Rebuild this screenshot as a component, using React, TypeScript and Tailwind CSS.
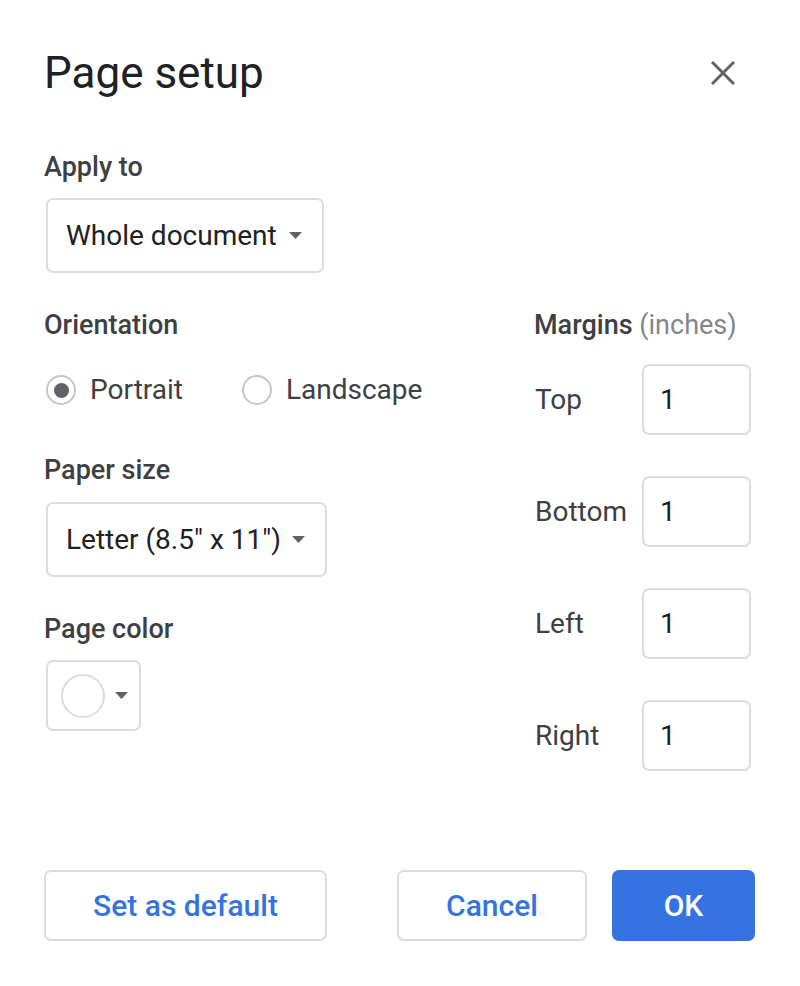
import React from "react";

const font = { fontFamily: "Roboto, 'Noto Sans', Arial, sans-serif" };

function Caret() {
  return (
    <svg width="13" height="7" viewBox="0 0 13 7" className="shrink-0">
      <path d="M0 0h13L6.5 7z" fill="#5f6368" />
    </svg>
  );
}

function Select({ value, width }: { value: string; width: string }) {
  return (
    <div
      className={`${width} h-[75px] flex items-center justify-between pl-[18px] pr-[20px] border-2 border-[#dadce0] rounded-[7px] bg-white`}
    >
      <span className="text-[28px] text-[#202124]">{value}</span>
      <Caret />
    </div>
  );
}

function Radio({ label, checked }: { label: string; checked?: boolean }) {
  return (
    <div className="flex items-center h-[32px]">
      <div className="w-[30px] h-[30px] rounded-full border-2 border-[#c4c7c5] flex items-center justify-center">
        {checked && <div className="w-[15px] h-[15px] rounded-full bg-[#5f6368]" />}
      </div>
      <span className="ml-[14px] text-[28px] text-[#3c4043]">{label}</span>
    </div>
  );
}

function MarginRow({ label }: { label: string }) {
  return (
    <div className="flex items-center">
      <span className="w-[108px] pl-[1px] text-[28px] text-[#3c4043]">{label}</span>
      <div className="w-[109px] h-[71px] flex items-center pl-[16px] border-2 border-[#dadce0] rounded-[7px] text-[28px] text-[#202124]">
        1
      </div>
    </div>
  );
}

export default function App() {
  return (
    <div className="w-[800px] h-[986px] bg-white pl-[44px] pr-[45px]" style={font}>
      {/* Header */}
      <div className="flex items-center justify-between pt-[47px] pr-[20px]">
        <h1 className="text-[44px] leading-[52px] font-normal text-[#202124]">Page setup</h1>
        <svg width="24" height="24" viewBox="0 0 24 24">
          <path d="M1 1L23 23M23 1L1 23" stroke="#5f6368" strokeWidth="3" />
        </svg>
      </div>

      {/* Apply to */}
      <div className="mt-[52px] text-[27px] leading-[32px] font-medium text-[#3c4043]">Apply to</div>
      <div className="mt-[15px] ml-[2px]">
        <Select value="Whole document" width="w-[278px]" />
      </div>

      <div className="flex mt-[36px]">
        {/* Left column */}
        <div className="w-[490px]">
          <div className="text-[27px] leading-[32px] font-medium text-[#3c4043]">Orientation</div>
          <div className="flex gap-[59px] mt-[33px] ml-[2px]">
            <Radio label="Portrait" checked />
            <Radio label="Landscape" />
          </div>

          <div className="mt-[48px] text-[27px] leading-[32px] font-medium text-[#3c4043]">Paper size</div>
          <div className="mt-[16px] ml-[2px]">
            <Select value={'Letter (8.5" x 11")'} width="w-[281px]" />
          </div>

          <div className="mt-[36px] text-[27px] leading-[32px] font-medium text-[#3c4043]">Page color</div>
          <div className="mt-[15px] ml-[2px] w-[95px] h-[71px] flex items-center pl-[13px] border-2 border-[#dadce0] rounded-[7px]">
            <div className="w-[44px] h-[44px] rounded-full border-2 border-[#dadce0]" />
            <div className="ml-[10px]">
              <Caret />
            </div>
          </div>
        </div>

        {/* Right column */}
        <div>
          <div className="text-[27px] leading-[32px] text-[#3c4043]">
            <span className="font-medium">Margins</span>{" "}
            <span className="text-[#80868b]">(inches)</span>
          </div>
          <div className="mt-[23px] flex flex-col gap-[41px]">
            <MarginRow label="Top" />
            <MarginRow label="Bottom" />
            <MarginRow label="Left" />
            <MarginRow label="Right" />
          </div>
        </div>
      </div>

      {/* Footer buttons */}
      <div className="flex mt-[99px]">
        <button className="w-[283px] h-[71px] border-2 border-[#dadce0] rounded-[7px] text-[30px] font-medium text-[#3574e0]">
          Set as default
        </button>
        <button className="ml-auto w-[190px] h-[71px] border-2 border-[#dadce0] rounded-[7px] text-[30px] font-medium text-[#3574e0]">
          Cancel
        </button>
        <button className="ml-[25px] w-[143px] h-[71px] rounded-[7px] bg-[#3574e0] text-[30px] font-medium text-white">
          OK
        </button>
      </div>
    </div>
  );
}
